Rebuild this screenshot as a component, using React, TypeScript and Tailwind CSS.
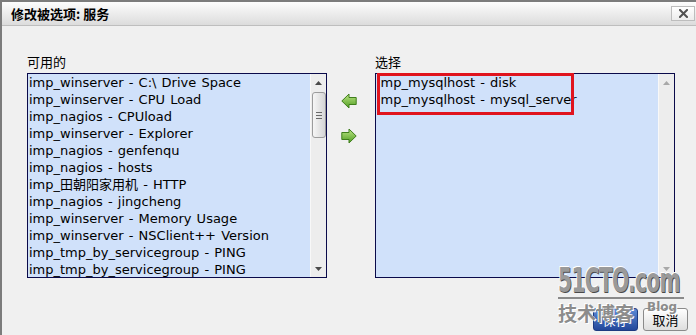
import React from "react";

const leftItems = [
  "imp_winserver - C:\\ Drive Space",
  "imp_winserver - CPU Load",
  "imp_nagios - CPUload",
  "imp_winserver - Explorer",
  "imp_nagios - genfenqu",
  "imp_nagios - hosts",
  "imp_田朝阳家用机 - HTTP",
  "imp_nagios - jingcheng",
  "imp_winserver - Memory Usage",
  "imp_winserver - NSClient++ Version",
  "imp_tmp_by_servicegroup - PING",
  "imp_tmp_by_servicegroup - PING",
];

const rightItems = ["imp_mysqlhost - disk", "imp_mysqlhost - mysql_server"];

const listFont = {
  fontFamily: '"DejaVu Sans", "Noto Sans CJK SC", sans-serif',
  wordSpacing: "1px",
};
const cjkFont = {
  fontFamily: '"Noto Sans CJK SC", "DejaVu Sans", sans-serif',
};

function UpTri({ color }: { color: string }) {
  return (
    <svg width="7" height="4" viewBox="0 0 7 4">
      <polygon points="0,4 3.5,0 7,4" fill={color} />
    </svg>
  );
}
function DownTri({ color }: { color: string }) {
  return (
    <svg width="7" height="4" viewBox="0 0 7 4">
      <polygon points="0,0 7,0 3.5,4" fill={color} />
    </svg>
  );
}

function Scrollbar({ enabled }: { enabled: boolean }) {
  const c = enabled ? "#4a4a4a" : "#a8a8a8";
  return (
    <div className="flex h-full w-[16px] flex-col items-center bg-[#ededed] border-l border-[#f8f8f8]">
      <div className="flex h-[17px] w-full items-center justify-center">
        <UpTri color={c} />
      </div>
      {enabled ? (
        <div className="mt-[1px] flex h-[46px] w-[14px] flex-col items-center justify-center gap-[2px] rounded-[3px] border border-[#9c9c9c] bg-linear-to-r from-[#f6f6f6] to-[#d6d6d6]">
          <div className="h-[1px] w-[6px] bg-[#6a6a6a]" />
          <div className="h-[1px] w-[6px] bg-[#6a6a6a]" />
          <div className="h-[1px] w-[6px] bg-[#6a6a6a]" />
        </div>
      ) : null}
      <div className="flex-1" />
      <div className="flex h-[17px] w-full items-center justify-center">
        <DownTri color={c} />
      </div>
    </div>
  );
}

function Arrow({ dir }: { dir: "left" | "right" }) {
  const id = dir === "left" ? "gl" : "gr";
  const pts =
    dir === "left"
      ? "0.8,8 8,1 8,4.5 15.2,4.5 15.2,11.5 8,11.5 8,15"
      : "15.2,8 8,1 8,4.5 0.8,4.5 0.8,11.5 8,11.5 8,15";
  return (
    <svg width="16" height="16" viewBox="0 0 16 16">
      <defs>
        <linearGradient id={id} x1="0" y1="0" x2="0" y2="1">
          <stop offset="0" stopColor="#bde685" />
          <stop offset="1" stopColor="#4f9c22" />
        </linearGradient>
      </defs>
      <polygon
        points={pts}
        fill={`url(#${id})`}
        stroke="#3f7e1c"
        strokeWidth="1"
        strokeLinejoin="round"
      />
    </svg>
  );
}

export default function App() {
  return (
    <div className="relative h-[335px] w-[696px] overflow-hidden border-l-2 border-t-2 border-[#7c7c7c] bg-[#f0f0f0]">
      {/* Title bar */}
      <div className="flex h-[24px] items-center justify-between border-b border-[#bebebe] bg-linear-to-b from-[#fdfdfd] to-[#dcdcdc] pl-[9px] pr-[1px]">
        <div
          className="text-[13px] font-bold leading-[16px] text-black"
          style={cjkFont}
        >
          修改被选项: 服务
        </div>
        <div className="flex h-[15px] w-[24px] items-center justify-center border border-[#bdbdbd] bg-linear-to-b from-[#ffffff] to-[#ececec]">
          <svg width="9" height="9" viewBox="0 0 9 9">
            <path
              d="M1 1 L8 8 M8 1 L1 8"
              stroke="#505050"
              strokeWidth="2"
              strokeLinecap="square"
            />
          </svg>
        </div>
      </div>

      {/* Content */}
      <div className="flex pl-[25px] pt-[27px]">
        {/* Left column */}
        <div className="flex w-[300px] flex-col">
          <div
            className="mb-[3px] h-[17px] text-[13px] leading-[17px] text-black"
            style={cjkFont}
          >
            可用的
          </div>
          <div className="flex h-[205px] border border-[#0a0a4a] bg-[#d0e1fa]">
            <div className="flex-1 overflow-hidden pl-[1px]" style={listFont}>
              {leftItems.map((t, i) => (
                <div
                  key={i}
                  className="h-[17px] overflow-hidden whitespace-nowrap text-[13px] leading-[17px] text-black"
                >
                  {t}
                </div>
              ))}
            </div>
            <Scrollbar enabled />
          </div>
        </div>

        {/* Middle arrows */}
        <div className="flex w-[48px] flex-col pl-[14px] pt-[40px]">
          <Arrow dir="left" />
          <div className="h-[19px]" />
          <Arrow dir="right" />
        </div>

        {/* Right column */}
        <div className="flex w-[300px] flex-col">
          <div
            className="mb-[3px] h-[17px] text-[13px] leading-[17px] text-black"
            style={cjkFont}
          >
            选择
          </div>
          <div className="flex h-[205px] border border-[#0a0a4a] bg-[#d0e1fa]">
            <div className="flex-1 overflow-hidden pl-[1px]" style={listFont}>
              {rightItems.map((t, i) => (
                <div
                  key={i}
                  className="h-[17px] overflow-hidden whitespace-nowrap text-[13px] leading-[17px] text-black"
                >
                  {t}
                </div>
              ))}
            </div>
            <Scrollbar enabled={false} />
          </div>
        </div>
      </div>

      {/* Buttons */}
      <div className="mt-[30px] flex justify-end gap-[5px] pr-[8px]">
        <div
          className="flex h-[23px] w-[45px] items-center justify-center rounded-[3px] border border-[#1c3a80] bg-linear-to-b from-[#5c8ad6] to-[#23479a] text-[13px] text-white"
          style={cjkFont}
        >
          保存
        </div>
        <div
          className="flex h-[23px] w-[45px] items-center justify-center rounded-[3px] border border-[#8a8a8a] bg-linear-to-b from-[#ffffff] to-[#dedede] text-[13px] text-black"
          style={cjkFont}
        >
          取消
        </div>
      </div>

      {/* Red annotation box */}
      <div className="pointer-events-none absolute left-[375px] top-[71px] h-[42px] w-[197px] border-[3px] border-[#e0141e]" />

      {/* Watermark */}
      <div className="pointer-events-none absolute left-[556px] top-[262px] w-[128px]">
        <div
          className="origin-left scale-x-[0.66] whitespace-nowrap text-[34px] font-bold leading-[32px] tracking-[-1px] text-[#9a9a9a]"
          style={{
            fontFamily: '"DejaVu Sans Condensed", "DejaVu Sans", sans-serif',
            textShadow: "1px 1px 0 #4a4a4a, -1px -1px 0 #ffffff",
          }}
        >
          51CTO.com
        </div>
        <div className="mt-[1px] h-[2px] w-[126px] bg-[#8a8a8a]" />
        <div className="mt-[3px] flex items-start">
          <div
            className="text-[19px] font-bold leading-[21px] text-[#8c8c8c]"
            style={{
              ...cjkFont,
              textShadow: "1px 1px 0 #ffffff, -1px -1px 0 #ffffff",
            }}
          >
            技术博客
          </div>
          <div
            className="ml-[13px] mt-[-2px] text-[12px] font-bold leading-[14px] text-[#8c8c8c]"
            style={{
              fontFamily: '"DejaVu Sans", sans-serif',
              textShadow: "1px 1px 0 #ffffff",
            }}
          >
            Blog
          </div>
        </div>
      </div>
    </div>
  );
}
